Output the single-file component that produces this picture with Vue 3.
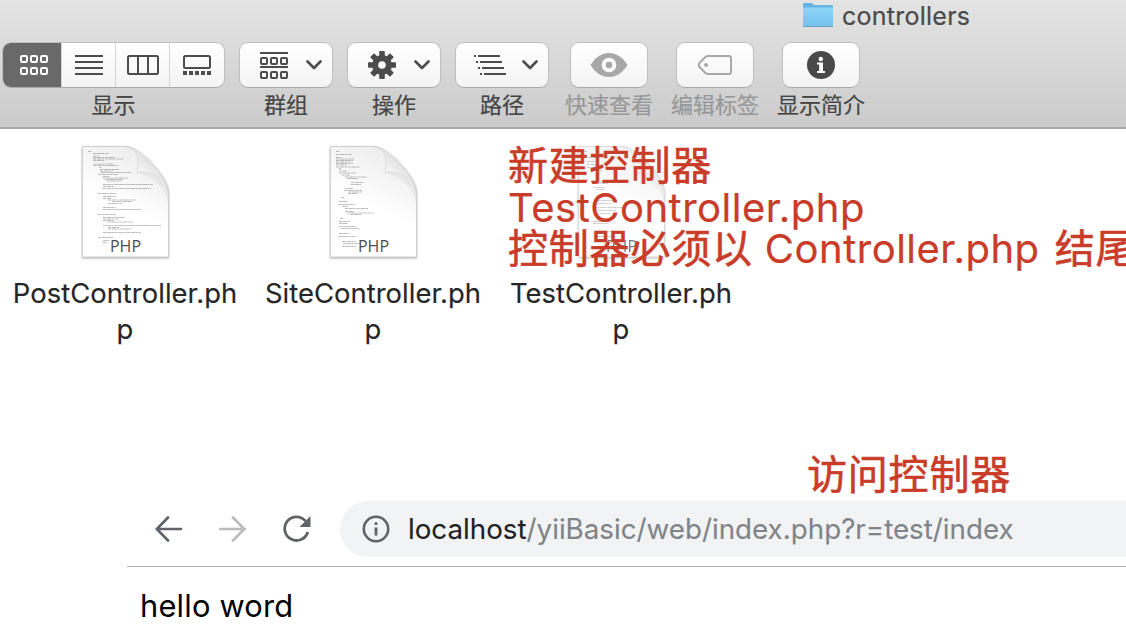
<script setup>
const chevron = 'M1.5 1.5 L8 8 L14.5 1.5'

const files = [
  {
    name: 'PostController.ph',
    cls: 'post',
    lines: [
      [6, 5, 4], [11, 7, 16], [11, 9.5, 6], [11, 11, 22], [11, 12.5, 30], [11, 14, 12], [12, 17.5, 19], [11, 19, 25],
      [17, 21, 2], [18, 23, 19], [18, 24.5, 13], [19, 26, 30], [16, 28, 20], [21, 30, 6], [21, 31.5, 25], [23, 33, 18], [25, 34.5, 14],
      [21, 38, 50], [21, 40, 11], [21, 42, 48], [16, 47, 18], [21, 50, 13], [21, 52, 8], [26, 53.5, 28], [30, 55, 20], [26, 57, 14],
      [21, 61, 13], [21, 63, 38], [16, 68, 18], [21, 71, 22], [21, 72.5, 16], [21, 74, 11], [25, 75.5, 26],
      [21, 79, 58], [26, 81, 12], [26, 82.5, 23], [21, 86, 38], [16, 91, 16], [21, 94, 6], [21, 96, 4]
    ]
  },
  {
    name: 'SiteController.ph',
    cls: 'site',
    lines: [
      [6, 5, 4], [6, 8, 16], [6, 11, 5], [6, 12.5, 18], [6, 14, 17], [6, 15.5, 14], [6, 17, 17], [6, 18.5, 11], [6, 20.5, 24],
      [9, 22, 2], [9, 24.5, 8], [9, 26.5, 17], [12, 28.5, 8], [15, 30.5, 22], [17, 32, 11], [21, 36, 13], [21, 38, 10], [15, 42, 8],
      [14, 44, 18], [18, 45.5, 14], [18, 47, 10], [11, 51, 3], [9, 55, 9], [8, 58, 17], [12, 60, 6], [15, 62, 23], [15, 65, 9],
      [17, 66.5, 27], [20, 68, 12], [10, 72, 3], [9, 75, 11], [9, 77, 9], [9, 80, 17], [11, 82, 18], [9, 87, 10], [9, 90, 17], [12, 95, 14], [13, 97, 18], [12, 100, 14]
    ]
  },
  {
    name: 'TestController.ph',
    cls: 'test',
    lines: [
      [6, 5, 4], [6, 11, 12], [9, 15, 8], [9, 18, 12], [9, 21, 17], [13, 24, 12], [20, 35, 14], [20, 37, 10], [15, 41, 12],
      [18, 43, 8], [20, 54, 16], [20, 57, 13], [18, 61, 26], [20, 64, 18], [18, 67, 14], [15, 75, 8], [15, 77, 16], [20, 85, 14], [16, 90, 22]
    ]
  }
]
</script>

<template>
  <div class="screen">
    <header class="finder-bar">
      <div class="title">
        <svg class="folder" width="32" height="26" viewBox="0 0 32 26">
          <defs>
            <linearGradient id="fold" x1="0" y1="0" x2="0" y2="1">
              <stop offset="0" stop-color="#8fd4f8" /><stop offset="1" stop-color="#72c2ef" />
            </linearGradient>
          </defs>
          <path d="M1 3 Q1 1 2.500 1 H9 Q10 1 11 2 L12 3 H29.500 Q31 3 31 4.500 V24 H1 Z" fill="#65b5e2" />
          <path d="M1 5.500 H31 V23.500 Q31 24.500 30 24.500 H2 Q1 24.500 1 23.500 Z" fill="url(#fold)" />
          <path d="M1 24.500 H31" stroke="#6f9fb9" />
        </svg>
        <span>controllers</span>
      </div>

      <nav class="tools">
        <div class="tool view">
          <div class="box seg">
            <div class="cell on">
              <svg width="30" height="22" viewBox="0 0 30 22" fill="none" stroke="#fff" stroke-width="2">
                <g v-for="y in [2, 14]" :key="y">
                  <rect v-for="x in [2, 12, 22]" :key="x" :x="x" :y="y" width="6" height="6" rx="1.200" />
                </g>
              </svg>
            </div>
            <div class="cell">
              <svg width="30" height="22" viewBox="0 0 30 22" stroke="#4c4c4c" stroke-width="2">
                <path d="M1 2H29M1 8H29M1 14H29M1 20H29" />
              </svg>
            </div>
            <div class="cell">
              <svg width="34" height="22" viewBox="0 0 34 22" fill="none" stroke="#4c4c4c" stroke-width="2">
                <rect x="2" y="2" width="30" height="18" rx="1.500" /><path d="M12 2V20M22 2V20" />
              </svg>
            </div>
            <div class="cell">
              <svg width="30" height="22" viewBox="0 0 30 22" fill="none" stroke="#4c4c4c" stroke-width="2">
                <rect x="2" y="2" width="26" height="12" rx="1.500" />
                <path d="M1 19H29" stroke-width="4" stroke-dasharray="4 2" />
              </svg>
            </div>
          </div>
          <span class="label">显示</span>
        </div>

        <div class="tool menu">
          <div class="box">
            <svg width="30" height="28" viewBox="0 0 30 28" fill="none" stroke="#4c4c4c" stroke-width="2">
              <path d="M1 2H29M1 16H29" />
              <g v-for="y in [7, 21]" :key="y">
                <rect v-for="x in [2, 12, 22]" :key="x" :x="x" :y="y" width="6" height="6" rx="1" />
              </g>
            </svg>
            <svg class="chev" width="16" height="10" viewBox="0 0 16 10"><path :d="chevron" /></svg>
          </div>
          <span class="label">群组</span>
        </div>

        <div class="tool menu">
          <div class="box">
            <svg width="30" height="28" viewBox="-15 -14 30 28" fill="#4c4c4c">
              <rect v-for="a in [0, 45, 90, 135]" :key="a" x="-2.800" y="-14" width="5.600" height="28" rx="0.800" :transform="`rotate(${a})`" />
              <circle r="10" />
              <circle r="3.800" fill="#fafafa" />
            </svg>
            <svg class="chev" width="16" height="10" viewBox="0 0 16 10"><path :d="chevron" /></svg>
          </div>
          <span class="label">操作</span>
        </div>

        <div class="tool menu">
          <div class="box path-box">
            <svg width="32" height="22" viewBox="0 0 32 22" stroke="#4c4c4c" stroke-width="2">
              <path d="M0 2H2M4 2H26M2 8H4M6 8H28M4 14H6M8 14H30M6 20H8M10 20H32" />
            </svg>
            <svg class="chev" width="16" height="10" viewBox="0 0 16 10"><path :d="chevron" /></svg>
          </div>
          <span class="label">路径</span>
        </div>

        <div class="tool single look off">
          <div class="box">
            <svg width="38" height="26" viewBox="0 0 38 26">
              <path d="M0.500 13 C6 4 13 1 19 1 S32 4 37.500 13 C32 22 25 25 19 25 S6 22 0.500 13Z" fill="#a8a8a8" />
              <circle cx="19" cy="13" r="5.300" fill="#a8a8a8" stroke="#fafafa" stroke-width="4" />
            </svg>
          </div>
          <span class="label">快速查看</span>
        </div>

        <div class="tool single off">
          <div class="box">
            <svg width="36" height="22" viewBox="0 0 36 22" fill="none" stroke="#a8a8a8" stroke-width="2">
              <path d="M11 2 H32 Q34 2 34 4 V18 Q34 20 32 20 H11 Q9.500 20 8.500 19 L2.500 13 Q1 11 2.500 9 L8.500 3 Q9.500 2 11 2Z" />
              <circle cx="9" cy="11" r="2" fill="#a8a8a8" stroke="none" />
            </svg>
          </div>
          <span class="label">编辑标签</span>
        </div>

        <div class="tool single">
          <div class="box">
            <svg width="28" height="28" viewBox="0 0 28 28">
              <circle cx="14" cy="14" r="14" fill="#494949" />
              <circle cx="13.800" cy="8" r="2.200" fill="#fff" />
              <path d="M10 11.500H16V20H18V22H10V20H12.200V13.500H10Z" fill="#fff" />
            </svg>
          </div>
          <span class="label">显示简介</span>
        </div>
      </nav>
    </header>

    <main class="files">
      <div v-for="f in files" :key="f.cls" class="file" :class="f.cls">
        <div class="doc">
          <svg width="96" height="120" viewBox="-5 -3 96 120">
            <defs>
              <linearGradient :id="`page-${f.cls}`" x1="0.200" y1="1" x2="0.600" y2="0">
                <stop offset="0.500" stop-color="#fff" /><stop offset="1" stop-color="#ececec" />
              </linearGradient>
              <linearGradient :id="`curl-${f.cls}`" x1="0" y1="1" x2="0.600" y2="0.300">
                <stop offset="0" stop-color="#fff" /><stop offset="0.500" stop-color="#fdfdfd" /><stop offset="1" stop-color="#dedede" />
              </linearGradient>
            </defs>
            <path class="page" d="M0.500 0.500 H44 C56 1 86.500 29 86.500 47 V111 H0.500Z" :fill="`url(#page-${f.cls})`" />
            <path d="M55 27 C64 23 82 32 86.500 47 L86.500 60 C84 39 70 31 55 27Z" fill="#dedede" opacity="0.500" />
            <path d="M44 0.500 C55 2 58 12 55 26.500 C69 24 82 32 86.500 47 C84.500 30 60 1 44 0.500Z" :fill="`url(#curl-${f.cls})`" stroke="#d0d0d0" stroke-width="0.600" />
            <g stroke="#666" stroke-width="0.900" opacity="0.480" stroke-dasharray="3 0.600 5 0.500 2 0.700">
              <path v-for="(l, i) in f.lines" :key="i" :d="`M${l[0]} ${l[1] + 0.5}h${l[2]}`" />
            </g>
          </svg>
          <span class="ext">PHP</span>
        </div>
        <p class="name">{{ f.name }}<br />p</p>
      </div>
      <p class="note create">新建控制器<br /><span class="latin">TestController.php</span><br />控制器必须以 <span class="latin">Controller.php</span><span class="tail"> 结尾</span></p>
    </main>

    <p class="note visit">访问控制器</p>

    <section class="browser">
      <div class="address-row">
        <svg class="back" width="28" height="26" viewBox="0 0 28 26"><path d="M26 13H2M13 1.500L1.800 13L13 24.500" /></svg>
        <svg class="back fwd" width="28" height="26" viewBox="0 0 28 26"><path d="M1 13H26M14 1.500L25.200 13L14 24.500" /></svg>
        <svg class="reload" width="28" height="28" viewBox="0 0 28 28">
          <path d="M24.800 17 A11.800 11.800 0 1 1 22.500 6" fill="none" stroke="#5f6368" stroke-width="2.800" />
          <path d="M27.500 1V12H16.500Z" fill="#5f6368" />
        </svg>
        <div class="omnibox">
          <svg width="28" height="28" viewBox="0 0 28 28">
            <circle cx="14" cy="14" r="12.200" fill="none" stroke="#5f6368" stroke-width="2.600" />
            <path d="M14 7.300V10M14 12.500V20.500" stroke="#5f6368" stroke-width="2.800" />
          </svg>
          <span class="url"><b>localhost</b>/yiiBasic/web/index.php?r=test/index</span>
        </div>
      </div>
      <p class="body">hello word</p>
    </section>
  </div>
</template>

<style>
body { background: #fff; overflow: hidden; }
</style>

<style scoped>
.screen { width: 1126px; height: 634px; overflow: hidden; display: flex; flex-direction: column; background: #fff; font-family: Inter, "Noto Sans CJK SC", sans-serif; }
.screen p { margin: 0; }
.finder-bar { box-sizing: border-box; flex: none; height: 129px; background: linear-gradient(#e4e4e4, #cbcbcb); border-bottom: 2px solid #a9a9a9; }
.title { height: 42px; padding-left: 802px; display: flex; align-items: flex-start; gap: 8px; color: #4b4b4b; font-size: 25px; line-height: 32px; letter-spacing: 0.25px; white-space: nowrap; -webkit-text-stroke: 0.2px #4b4b4b; }
.folder { margin-top: 2px; flex: none; }
.tools { display: flex; padding-left: 2px; }
.tool { display: flex; flex-direction: column; align-items: center; margin-right: 14px; }
.tool .label { width: 0; display: flex; justify-content: center; white-space: nowrap; font-size: 22px; line-height: 34px; color: #454545; -webkit-text-stroke: 0.2px currentColor; }
.box { box-sizing: border-box; height: 46px; border: 1px solid #c0c0c0; border-bottom-color: #a9a9a9; border-radius: 9px; background: linear-gradient(#fff, #f4f4f4); display: flex; align-items: center; }
.seg { width: 223px; overflow: hidden; }
.cell { box-sizing: border-box; flex: none; width: 54px; height: 100%; display: flex; align-items: center; justify-content: center; border-left: 1px solid #d4d4d4; }
.cell:last-child { flex: 1; }
.cell.on { width: 58px; border: 0; padding-left: 3px; background: #696969; }
.menu .box { width: 94px; padding-left: 19px; gap: 17px; }
.menu .path-box { padding-left: 18px; gap: 16px; }
.chev { fill: none; stroke: #4c4c4c; stroke-width: 2.6; stroke-linecap: round; stroke-linejoin: round; }
.single .box { width: 78px; justify-content: center; }
.single { margin-right: 28px; }
.look { margin-left: 7px; }
.tool.off .label { color: #989898; }
.files { position: relative; flex: none; height: 320px; display: grid; grid-template-columns: repeat(3, 248px); padding-left: 1px; align-items: start; }
.file { display: flex; flex-direction: column; align-items: center; padding-top: 14px; }
.doc { display: grid; justify-items: center; }
.doc > * { grid-area: 1 / 1; }
.page { stroke: #c8c8c8; stroke-width: 0.8; filter: drop-shadow(0 1px 1px rgba(0, 0, 0, 0.3)); }
.ext { align-self: end; margin: 0 0 7px 1px; font-size: 16px; line-height: 20px; color: #4d4d4d; font-family: "Open Sans", sans-serif; }
.test .doc { opacity: 0.75; }
.screen .name { margin-top: 12px; font-size: 27.4px; line-height: 36px; color: #262626; text-align: center; white-space: nowrap; letter-spacing: 0.04px; -webkit-text-stroke: 0.15px #262626; }
.note { color: #c93c29; font-size: 40px; line-height: 41.5px; letter-spacing: 0.8px; white-space: nowrap; -webkit-text-stroke: 0.6px #c93c29; }
.create { position: absolute; left: 508px; top: 16px; }
.latin { letter-spacing: 0.5px; -webkit-text-stroke: 0.2px #c93c29; }
.tail { word-spacing: 3px; }
.screen .visit { flex: none; margin: 5px 0 0 807px; height: 46px; line-height: 42px; }
.browser { margin-left: 127px; display: flex; flex-direction: column; }
.address-row { box-sizing: border-box; height: 67px; display: flex; align-items: center; border-bottom: 1px solid #b4b4b8; padding: 1px 0 9px 28px; }
.back { fill: none; stroke: #5f6368; stroke-width: 2.7; stroke-linecap: round; }
.fwd { stroke: #bcbcbc; margin: 0 36px; }
.omnibox { flex: 1; height: 56px; margin-left: 29px; border-radius: 28px 0 0 28px; background: #f1f3f4; display: flex; align-items: center; padding-left: 22px; gap: 18px; }
.url { font-size: 27.75px; color: #808488; white-space: nowrap; -webkit-text-stroke: 0.1px currentColor; }
.url b { font-weight: 400; color: #202124; }
.screen .body { padding: 20px 0 0 13px; font-size: 30.8px; line-height: 38px; letter-spacing: 0.2px; color: #000; }
</style>
